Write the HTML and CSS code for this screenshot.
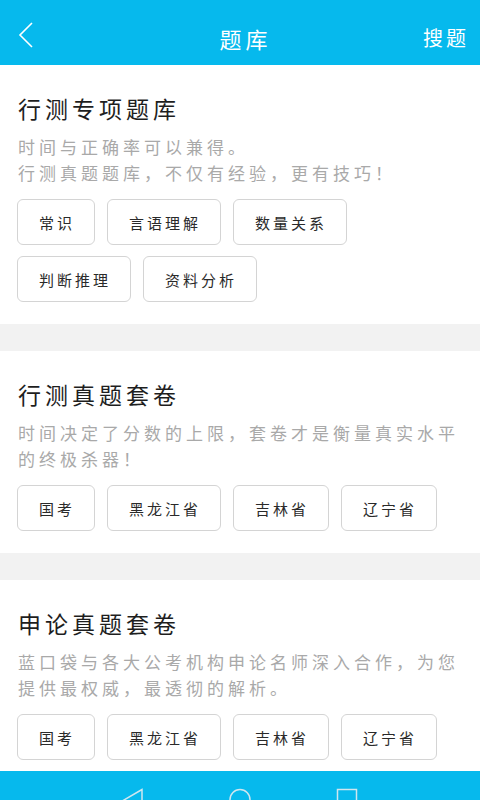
FILE: index.html
```html
<!DOCTYPE html>
<html lang="zh-CN">
<head>
<meta charset="utf-8">
<title>题库</title>
<link rel="stylesheet" href="styles.css">
</head>
<body>
<div class="page">
  <header class="topbar">
    <div class="back">
      <svg width="16" height="26" viewBox="0 0 16 26"><polyline points="14,1 2,13 14,25" fill="none" stroke="#fff" stroke-width="1.6"/></svg>
    </div>
    <div class="title">题库</div>
    <div class="action">搜题</div>
  </header>
  <main class="content">
    <section class="card">
      <h2 class="card-title">行测专项题库</h2>
      <p class="card-desc">时间与正确率可以兼得。<br>行测真题题库，不仅有经验，更有技巧！</p>
      <div class="tags">
        <span class="tag">常识</span>
        <span class="tag">言语理解</span>
        <span class="tag">数量关系</span>
        <span class="tag">判断推理</span>
        <span class="tag">资料分析</span>
      </div>
    </section>
    <section class="card">
      <h2 class="card-title">行测真题套卷</h2>
      <p class="card-desc">时间决定了分数的上限，套卷才是衡量真实水平的终极杀器！</p>
      <div class="tags">
        <span class="tag">国考</span>
        <span class="tag">黑龙江省</span>
        <span class="tag">吉林省</span>
        <span class="tag">辽宁省</span>
      </div>
    </section>
    <section class="card">
      <h2 class="card-title">申论真题套卷</h2>
      <p class="card-desc">蓝口袋与各大公考机构申论名师深入合作，为您提供最权威，最透彻的解析。</p>
      <div class="tags">
        <span class="tag">国考</span>
        <span class="tag">黑龙江省</span>
        <span class="tag">吉林省</span>
        <span class="tag">辽宁省</span>
      </div>
    </section>
  </main>
  <nav class="navbar">
    <svg class="nav-icon" width="22" height="24" viewBox="0 0 22 24"><polygon points="20,1.5 2,12 20,22.5" fill="none" stroke="#cfe6ef" stroke-width="1.5"/></svg>
    <svg class="nav-icon" width="22" height="24" viewBox="0 0 22 24"><circle cx="11" cy="11.5" r="10" fill="none" stroke="#cfe6ef" stroke-width="1.5"/></svg>
    <svg class="nav-icon" width="22" height="24" viewBox="0 0 22 24"><rect x="1.5" y="1.5" width="19" height="21" fill="none" stroke="#cfe6ef" stroke-width="1.5"/></svg>
  </nav>
</div>
</body>
</html>
```
FILE: styles.css
```css
* { box-sizing: border-box; }
html, body {
  margin: 0;
  padding: 0;
}
body {
  width: 480px;
  height: 800px;
  overflow: hidden;
  background: #f2f2f2;
  font-family: "Noto Sans CJK SC", "Noto Sans", sans-serif;
}
.page {
  display: flex;
  flex-direction: column;
  height: 800px;
}
.topbar {
  flex: 0 0 65px;
  background: #06b9ed;
  display: grid;
  grid-template-columns: 1fr auto 1fr;
  align-items: center;
  padding: 10px 11px 0 18px;
  color: #fff;
}
.back {
  display: flex;
  align-items: center;
  margin-top: -5px;
}
.back svg { display: block; }
.title {
  font-size: 22px;
  letter-spacing: 4px;
  margin-right: -4px;
  line-height: 30px;
}
.action {
  justify-self: end;
  font-size: 20px;
  letter-spacing: 3px;
  line-height: 30px;
}
.content {
  flex: 1;
  overflow: hidden;
  display: flex;
  flex-direction: column;
  gap: 27px;
}
.card {
  background: #fff;
  padding: 27px 17px 22px;
}
.card-title {
  margin: 0 0 0 1px;
  font-size: 23px;
  font-weight: 400;
  line-height: 32px;
  letter-spacing: 4px;
  color: #1e1e1e;
}
.card-desc {
  margin: 10px 0 0 1px;
  font-size: 17px;
  line-height: 26px;
  letter-spacing: 4px;
  color: #a9a9a9;
}
.tags {
  margin-top: 13px;
  display: flex;
  flex-wrap: wrap;
  column-gap: 12px;
  row-gap: 11px;
}
.tag {
  height: 46px;
  display: flex;
  align-items: center;
  padding: 0 19px 0 21px;
  border: 1px solid #d4d4d4;
  border-radius: 6px;
  font-size: 15px;
  letter-spacing: 3px;
  color: #2a2a2a;
}
.navbar {
  flex: 0 0 29px;
  background: #06b9ed;
  overflow: hidden;
  display: flex;
  justify-content: center;
  align-items: flex-start;
  gap: 85px;
  padding-top: 17px;
}
.nav-icon { display: block; flex: 0 0 22px; }
```
